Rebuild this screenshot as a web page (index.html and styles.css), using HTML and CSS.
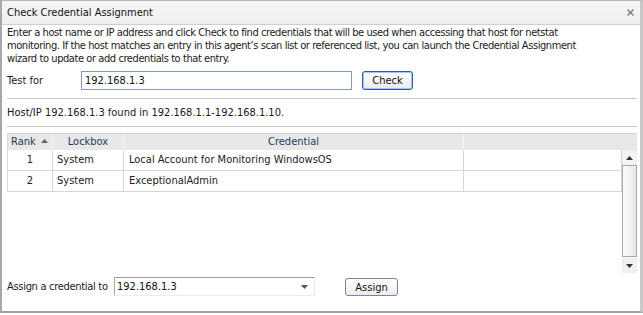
FILE: index.html
```html
<!DOCTYPE html>
<html lang="en">
<head>
  <meta charset="UTF-8" />
  <title>Check Credential Assignment</title>
  <link rel="stylesheet" href="styles.css">
</head>
<body>
  <div class="window">
    <div class="titlebar">
      <span class="title">Check Credential Assignment</span>
      <svg class="close" width="7" height="7" viewBox="0 0 7 7">
        <path d="M0.5 0.5L6.5 6.5M6.5 0.5L0.5 6.5" stroke="#707070" stroke-width="1.1" fill="none"/>
      </svg>
    </div>

    <div class="content">
      <p class="intro">Enter a host name or IP address and click Check to find credentials that will be used when accessing that host for netstat<br>monitoring. If the host matches an entry in this agent’s scan list or referenced list, you can launch the Credential Assignment<br>wizard to update or add credentials to that entry.</p>

      <div class="test-row">
        <label class="test-label">Test for</label>
        <input class="test-input" type="text" value="192.168.1.3">
        <button class="btn btn-default">Check</button>
      </div>

      <div class="sep"></div>
      <p class="result">Host/IP 192.168.1.3 found in 192.168.1.1-192.168.1.10.</p>
      <div class="sep"></div>

      <div class="grid">
        <div class="grid-head">
          <div class="hcell c-rank">Rank
            <svg class="sort" width="7" height="4" viewBox="0 0 7 4"><path d="M0 4L3.5 0L7 4Z" fill="#666"/></svg>
          </div>
          <div class="hcell c-lock">Lockbox</div>
          <div class="hcell c-cred">Credential</div>
          <div class="hcell c-rest"></div>
        </div>
        <div class="grid-body">
          <div class="rows">
            <div class="row">
              <div class="cell c-rank num">1</div>
              <div class="cell c-lock">System</div>
              <div class="cell c-cred">Local Account for Monitoring WindowsOS</div>
              <div class="cell c-fill"></div>
            </div>
            <div class="row">
              <div class="cell c-rank num">2</div>
              <div class="cell c-lock">System</div>
              <div class="cell c-cred">ExceptionalAdmin</div>
              <div class="cell c-fill"></div>
            </div>
          </div>
          <div class="scrollbar">
            <div class="sb-btn">
              <svg width="7" height="4" viewBox="0 0 7 4"><path d="M0 4L3.5 0L7 4Z" fill="#333"/></svg>
            </div>
            <div class="sb-thumb"></div>
            <div class="sb-btn sb-down">
              <svg width="7" height="4" viewBox="0 0 7 4"><path d="M0 0L7 0L3.5 4Z" fill="#333"/></svg>
            </div>
          </div>
        </div>
      </div>

      <div class="assign-row">
        <label class="assign-label">Assign a credential to</label>
        <div class="combo">
          <span class="combo-text">192.168.1.3</span>
          <svg class="combo-arrow" width="7" height="4" viewBox="0 0 7 4"><path d="M0 0L7 0L3.5 4Z" fill="#555"/></svg>
        </div>
        <button class="btn btn-assign">Assign</button>
      </div>
    </div>
  </div>
</body>
</html>
```

FILE: styles.css
```css
body {
  margin: 0;
  background: #fff;
  font-family: "DejaVu Sans Condensed", "DejaVu Sans", sans-serif;
  font-size: 11px;
  color: #1a1a1a;
}
.window {
  width: 643px;
  height: 313px;
  box-sizing: border-box;
  border-top: 1px solid #b4b4b4;
  border-left: 2px solid #a8a8a8;
  border-right: 3px solid #c8c8c8;
  border-bottom: 2px solid #a0a0a0;
  background: #fff;
  display: flex;
  flex-direction: column;
}
.titlebar {
  height: 23px;
  border-bottom: 1px solid #cfcfcf;
  background: linear-gradient(#f7f7f7, #eeeeee);
  display: flex;
  align-items: center;
  justify-content: space-between;
  padding: 0 6px 0 5px;
}
.title {
  font-size: 11px;
  color: #111;
}
.close {
  display: block;
}
.content {
  padding: 1px 1px 0 5px;
  display: flex;
  flex-direction: column;
}
.intro {
  margin: 0;
  line-height: 13px;
  white-space: nowrap;
  letter-spacing: -0.42px;
}
.test-row {
  display: flex;
  align-items: center;
  margin-top: 6px;
  height: 19px;
}
.test-label {
  width: 74px;
}
.test-input {
  width: 271px;
  height: 19px;
  box-sizing: border-box;
  border: 1px solid #7f9db9;
  padding: 0 3px;
  font: inherit;
  color: #111;
  margin: 0 10px 0 0;
}
.btn {
  font: inherit;
  color: #111;
  height: 19px;
  box-sizing: border-box;
  border-radius: 3px;
  background: linear-gradient(#ffffff, #ececec);
  padding: 0;
}
.btn-default {
  width: 51px;
  border: 1px solid #2c5aa4;
  box-shadow: inset 0 0 0 1px #a8c4ec;
}
.sep {
  height: 1px;
  background: #c6c6c6;
  margin-right: 2px;
}
.test-row + .sep {
  margin-top: 8px;
}
.result {
  margin: 7px 0;
  line-height: 13px;
}
.grid {
  margin-top: 6px;
  margin-right: 2px;
}
.grid-head {
  display: flex;
  height: 16px;
  border-top: 1px solid #d0d0d0;
  background: #e8e8e8;
  color: #203a5c;
}
.hcell {
  line-height: 16px;
  text-align: center;
  border-left: 1px solid #f6f6f6;
  box-sizing: border-box;
}
.hcell:first-child {
  border-left: 1px solid #d8d8d8;
  text-align: left;
  padding-left: 3px;
}
.sort {
  margin-left: 2px;
  vertical-align: 2px;
}
.c-rank { width: 45px; }
.c-lock { width: 71px; }
.c-cred { width: 340px; }
.c-rest { flex: 1; }
.grid-body {
  display: flex;
  height: 123px;
}
.rows {
  flex: 1;
}
.row {
  display: flex;
  height: 21px;
  border-bottom: 1px solid #d6d6d6;
  box-sizing: border-box;
}
.cell {
  line-height: 20px;
  box-sizing: border-box;
  border-left: 1px solid #d6d6d6;
  padding-left: 4px;
  color: #222;
}
.cell.num {
  text-align: center;
  padding-left: 0;
}
.cell.c-cred {
  padding-left: 5px;
}
.c-fill {
  flex: 1;
  border-right: 1px solid #d6d6d6;
}
.scrollbar {
  width: 15px;
  display: flex;
  flex-direction: column;
}
.sb-btn {
  height: 15px;
  display: flex;
  align-items: center;
  justify-content: center;
  background: #f4f4f4;
  border: 1px solid #ededed;
  box-sizing: border-box;
}
.sb-thumb {
  flex: 1;
  border: 1px solid #a8a8a8;
  background: linear-gradient(90deg, #fdfdfd, #e6e6e6);
  margin: 0 0 1px;
}
.sb-down {
  background: #f0f0f0;
}
.assign-row {
  display: flex;
  align-items: center;
  margin-top: 4px;
  height: 19px;
}
.assign-label {
  width: 107px;
  white-space: nowrap;
  letter-spacing: -0.3px;
}
.combo {
  width: 201px;
  height: 19px;
  box-sizing: border-box;
  border-top: 1px solid #9a9a9a;
  border-left: 1px solid #a8a8a8;
  border-right: 1px solid #ececec;
  border-bottom: 1px solid #ececec;
  display: flex;
  align-items: center;
  justify-content: space-between;
  padding: 0 6px 0 2px;
  margin-right: 30px;
}
.combo-text {
  color: #111;
}
.btn-assign {
  width: 53px;
  height: 18px;
  margin-top: 1px;
  border: 1px solid #7286a4;
}
```
